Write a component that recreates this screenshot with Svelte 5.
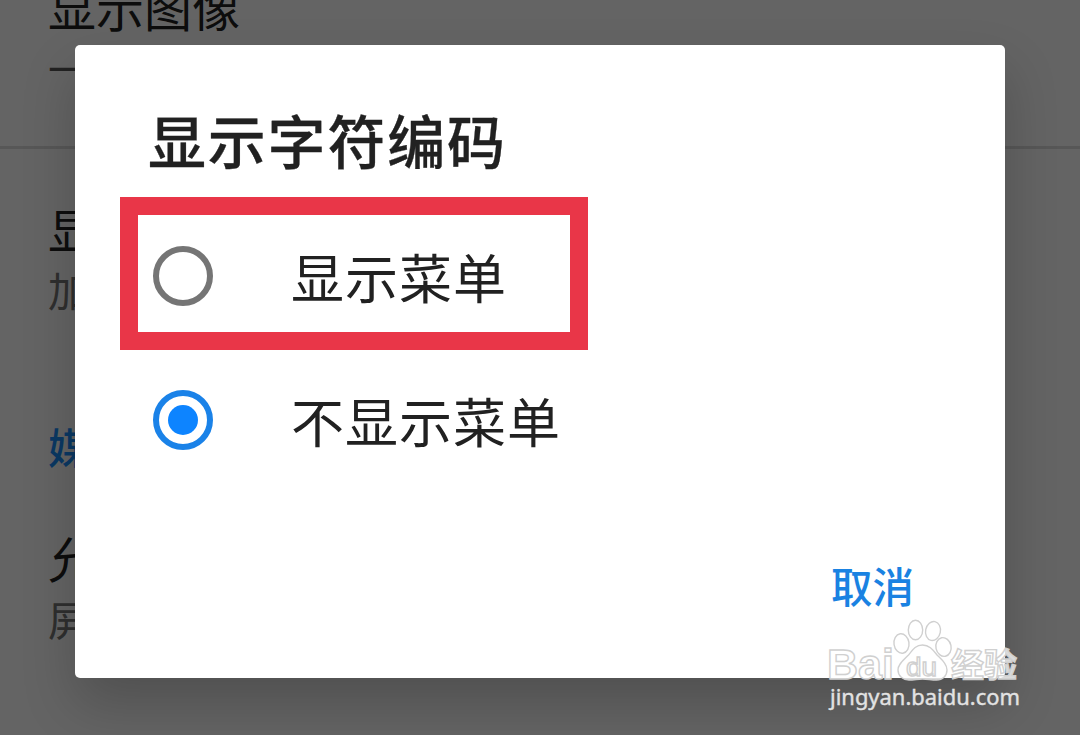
<script lang="ts">
	interface Option {
		readonly value: string;
		readonly label: string;
		readonly marked?: boolean;
	}

	const options: readonly Option[] = [
		{ value: 'show', label: '显示菜单', marked: true },
		{ value: 'hide', label: '不显示菜单' },
	];

	let selected = $state('hide');
</script>

<div class="screen">
	<main class="settings">
		<section class="group first">
			<p class="name">显示图像</p>
			<p class="summary">一</p>
		</section>
		<section class="group second">
			<p class="name">显</p>
			<p class="summary">加</p>
		</section>
		<h2>媒</h2>
		<section class="group">
			<p class="name">允</p>
			<p class="summary">屏</p>
		</section>
	</main>

	<div class="scrim">
		<div class="dialog" role="dialog" aria-labelledby="dialog-title">
			<h1 id="dialog-title">显示字符编码</h1>
			<div class="options" role="radiogroup">
				{#each options as option (option.value)}
					<button
						class="option"
						type="button"
						role="radio"
						aria-checked={selected === option.value}
						onclick={() => (selected = option.value)}
					>
						<span class="radio" class:checked={selected === option.value}></span>
						<span>{option.label}</span>
						{#if option.marked}
							<span class="marker"></span>
						{/if}
					</button>
				{/each}
			</div>
			<footer>
				<button class="cancel" type="button">取消</button>
			</footer>
		</div>
	</div>

	<svg class="watermark" width="200" height="96" viewBox="0 0 200 96">
		<g class="logo">
			<text x="2" y="61" font-size="43" textLength="67" lengthAdjust="spacingAndGlyphs">Bai</text>
			<ellipse cx="76.500" cy="25.500" rx="7.500" ry="9.800" transform="rotate(-8 76.500 25.500)" />
			<ellipse cx="90.500" cy="12" rx="7.200" ry="9.800" />
			<ellipse cx="108" cy="13" rx="7.400" ry="9.600" transform="rotate(12 108 13)" />
			<ellipse cx="118.500" cy="29" rx="7.600" ry="9.400" transform="rotate(-12 118.500 29)" />
			<path d="M97.500 27c-7 0-10 5-14 10-5 5-10.500 9-10.500 15 0 6 5 10 11 10 5 0 9-1 13.500-1s9 1 14 1c6 0 10.500-4 10.500-10 0-6-5-10-10-15-4-5-7.500-10-14.500-10z" />
			<text class="du" x="81" y="58" font-size="26" textLength="31" lengthAdjust="spacingAndGlyphs">du</text>
			<text class="cjk" x="126" y="59" font-size="33" textLength="66" lengthAdjust="spacingAndGlyphs">经验</text>
		</g>
		<text class="url" x="5" y="87" font-size="21.500" textLength="190" lengthAdjust="spacingAndGlyphs">jingyan.baidu.com</text>
	</svg>
</div>

<style>
	:global(body) {
		margin: 0;
	}
	.screen {
		position: relative;
		width: 1080px;
		height: 735px;
		overflow: hidden;
		background: #fafafa;
		font-family: 'Noto Sans CJK SC', sans-serif;
	}
	p,
	h1,
	h2 {
		margin: 0;
	}
	button {
		padding: 0;
		border: none;
		background: none;
		color: inherit;
		font: inherit;
		cursor: pointer;
	}
	.settings {
		display: flex;
		flex-direction: column;
		height: 735px;
		overflow: hidden;
	}
	.group {
		display: flex;
		flex-direction: column;
		flex-shrink: 0;
		padding-left: 48px;
	}
	/* scrolled partly out of view */
	.first {
		box-sizing: border-box;
		height: 149px;
		border-bottom: 3px solid #dadada;
	}
	.first .name {
		margin-top: -24px;
	}
	.name {
		flex-shrink: 0;
		height: 63px;
		color: #212121;
		font-size: 48px;
		line-height: 60px;
	}
	.summary {
		flex-shrink: 0;
		height: 56px;
		color: #757575;
		font-size: 41px;
		line-height: 56px;
	}
	.first .summary {
		color: #555;
	}
	.second {
		padding-top: 49px;
	}
	h2 {
		padding: 99px 0 0 48px;
		color: #1a8cf8;
		font-size: 42px;
		font-weight: 500;
		line-height: 60px;
	}
	h2 + .group {
		padding-top: 51px;
	}
	.scrim {
		position: absolute;
		inset: 0;
		box-sizing: border-box;
		padding: 45px 75px 57px;
		background: rgba(0, 0, 0, 0.6);
	}
	.dialog {
		display: flex;
		flex-direction: column;
		box-sizing: border-box;
		height: 633px;
		padding-top: 54px;
		border-radius: 5px;
		background: #fff;
		color: #212121;
		box-shadow: 0 26px 54px rgba(0, 0, 0, 0.2);
	}
	h1 {
		padding-left: 73px;
		font-size: 58px;
		font-weight: 500;
		letter-spacing: 1.8px;
		line-height: 80px;
		-webkit-text-stroke: 0.3px currentColor;
	}
	.options {
		padding-top: 25px;
	}
	.option {
		position: relative;
		display: flex;
		align-items: center;
		gap: 78px;
		width: 100%;
		height: 144px;
		padding-left: 78px;
		font-size: 53px;
		letter-spacing: 1px;
		line-height: 76px;
	}
	.radio {
		display: grid;
		place-items: center;
		box-sizing: border-box;
		width: 60px;
		height: 60px;
		border: 6px solid #757575;
		border-radius: 50%;
	}
	.radio.checked {
		border-color: #1a82e8;
	}
	.checked::after {
		width: 30px;
		height: 30px;
		border-radius: 50%;
		background: #0d84ff;
		content: '';
	}
	/* callout drawn over the option it points at */
	.marker {
		position: absolute;
		top: -7px;
		left: 45px;
		box-sizing: border-box;
		width: 468px;
		height: 153px;
		border: 18px solid #e93648;
	}
	footer {
		display: flex;
		justify-content: flex-end;
		padding: 63px 91px 0 0;
	}
	.cancel {
		color: #1a82e2;
		font-size: 41.5px;
		font-weight: 500;
		line-height: 60px;
	}
	.watermark {
		position: absolute;
		top: 618px;
		left: 825px;
	}
	.logo {
		fill: rgba(255, 255, 255, 0.8);
		stroke: #d0d0d0;
		stroke-width: 1.4;
		font-family: 'Liberation Sans', sans-serif;
		font-weight: 700;
	}
	.logo .cjk {
		font-family: 'Noto Sans CJK SC', sans-serif;
	}
	.logo .du {
		fill: #fff;
		font-weight: 400;
	}
	.url {
		fill: #e2e2e2;
		stroke: #e2e2e2;
		stroke-width: 0.4;
		font-family: 'Noto Sans', sans-serif;
	}
</style>
